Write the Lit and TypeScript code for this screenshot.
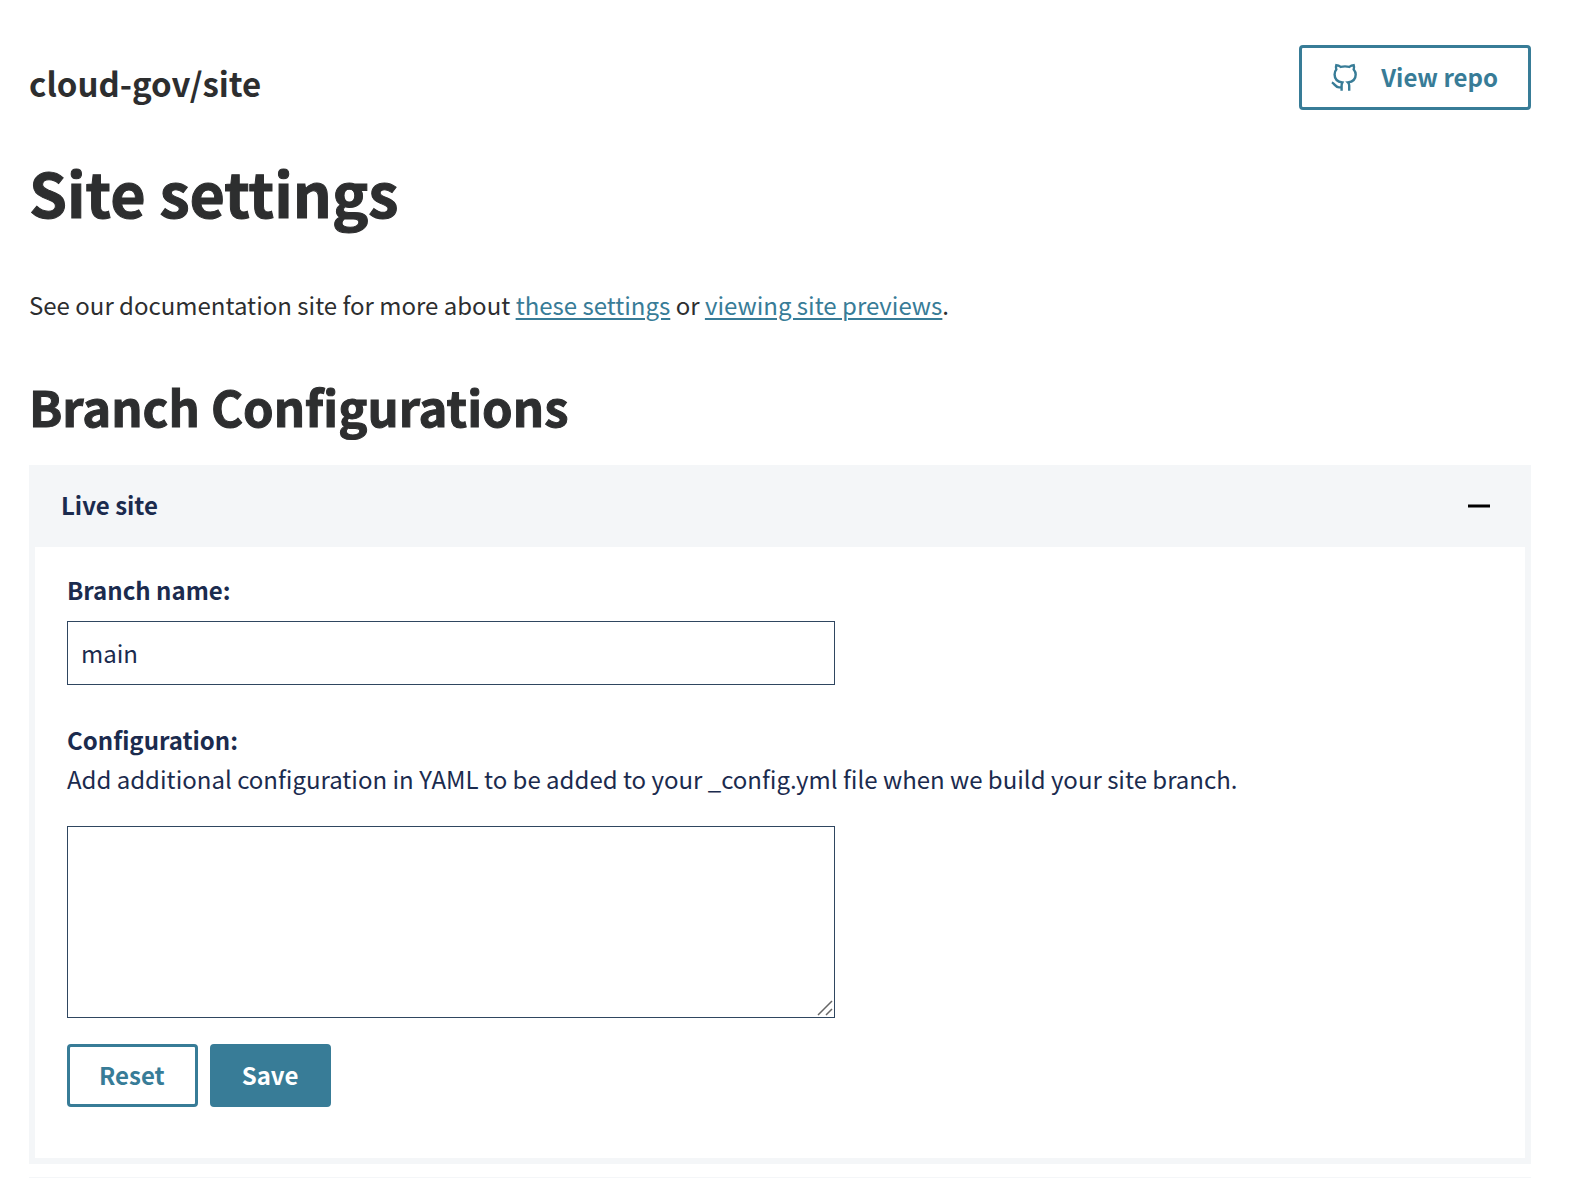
import { LitElement, html, css, nothing } from "lit";
import { customElement, state } from "lit/decorators.js";

@customElement("app-root")
export class AppRoot extends LitElement {
  @state() private open = true;

  static styles = css`
    :host {
      display: block;
      background: #fff;
      color: #2d2e2f;
      font-family: "Source Sans Pro", "Noto Sans CJK JP", "Noto Sans", sans-serif;
      font-size: 24px;
      line-height: 36px;
    }
    * {
      box-sizing: border-box;
    }
    .page {
      padding: 45px 43px 0 29px;
    }
    .top {
      display: flex;
      justify-content: space-between;
      align-items: flex-start;
    }
    h1,
    h2,
    h3,
    p {
      margin: 0;
    }
    .site {
      padding-top: 18px;
      font-size: 33px;
      line-height: 40px;
      font-weight: 700;
    }
    .title {
      margin-top: 46px;
      font-size: 61px;
      line-height: 72px;
      -webkit-text-stroke: 1px currentColor;
    }
    .intro {
      margin-top: 59px;
    }
    .intro a {
      color: #387c97;
      text-decoration-thickness: 2px;
      text-underline-offset: 3px;
    }
    .section {
      margin: 53px 0 29px;
      font-size: 49px;
      line-height: 60px;
      -webkit-text-stroke: 1px currentColor;
    }
    .btn {
      display: inline-flex;
      align-items: center;
      justify-content: center;
      padding: 11px 30px 12px 29px;
      border: 3px solid #387c97;
      border-radius: 4px;
      background: #fff;
      color: #387c97;
      font: inherit;
      font-weight: 700;
      text-decoration: none;
      cursor: pointer;
    }
    .repo {
      gap: 22px;
    }
    .repo svg {
      width: 28px;
      height: 28px;
    }
    .primary {
      background: #387c97;
      color: #fff;
    }
    .panel {
      margin-bottom: 13px;
      border: 6px solid #f4f6f8;
      border-top: 0;
      color: #1b2b4e;
    }
    .divider {
      height: 1px;
      background: #f4f6f8;
    }
    .heading {
      margin: 0 -6px;
      font-size: 24px;
      line-height: 36px;
    }
    .toggle {
      display: flex;
      align-items: center;
      justify-content: space-between;
      width: 100%;
      padding: 22px 40px 24px 32px;
      border: 0;
      background: #f4f6f8;
      color: inherit;
      font: inherit;
      font-weight: 700;
      text-align: left;
      cursor: pointer;
    }
    .toggle svg {
      width: 24px;
      height: 24px;
      display: block;
    }
    .body {
      padding: 25px 32px 51px;
    }
    .label {
      display: block;
      font-weight: 700;
    }
    .input,
    .area {
      display: block;
      width: 100%;
      margin: 0;
      border: 1px solid #2f4660;
      border-radius: 0;
      background: #fff;
      color: inherit;
      font: inherit;
    }
    .input {
      max-width: 768px;
      height: 64px;
      margin: 13px 0 37px;
      padding: 0 13px 2px;
    }
    .hint {
      margin: 3px 0 29px;
    }
    .area-wrap {
      position: relative;
      max-width: 768px;
    }
    .area {
      height: 192px;
      padding: 12px;
      resize: vertical;
    }
    .area::-webkit-resizer {
      background: transparent;
    }
    .grip {
      position: absolute;
      right: 2px;
      bottom: 2px;
      width: 16px;
      height: 16px;
      pointer-events: none;
    }
    .actions {
      display: flex;
      gap: 12px;
      margin-top: 26px;
    }
    .actions .btn {
      padding-top: 10px;
      padding-bottom: 11px;
    }
  `;

  private renderBody() {
    return html`
      <form class="body" id="live" @submit=${(e: Event) => e.preventDefault()}>
        <label class="label" for="branch">Branch name:</label>
        <input class="input" id="branch" type="text" value="main" />
        <label class="label" for="config">Configuration:</label>
        <p class="hint" id="hint">
          Add additional configuration in YAML to be added to your _config.yml file when we build your site branch.
        </p>
        <div class="area-wrap">
          <textarea class="area" id="config" aria-describedby="hint"></textarea>
          <svg class="grip" viewBox="0 0 16 16" fill="none" stroke="#666" stroke-width="1.5" aria-hidden="true">
            <path d="M1 15 15 1M9 15l6-6" />
          </svg>
        </div>
        <div class="actions">
          <button class="btn" type="reset">Reset</button>
          <button class="btn primary" type="submit">Save</button>
        </div>
      </form>
    `;
  }

  render() {
    return html`
      <main class="page">
        <header class="top">
          <p class="site">cloud-gov/site</p>
          <a class="btn repo" href="#repo">
            <svg viewBox="0 0 28 28" fill="none" stroke="currentColor" stroke-width="2.4" aria-hidden="true">
              <path
                d="M10.6 27.8V22.5C10.6 21 11 20.1 11.4 19.4C6.4 18.7 3.6 16.2 3.6 11.4C3.6 9.2 4.2 7.8 5.3 6.5C4.8 4.8 4.8 3.4 5.3 2.1C7 2.2 8.4 2.9 9.7 3.9C12.4 3.3 15.6 3.3 18.3 3.9C19.6 2.9 21 2.2 22.7 2.1C23.2 3.4 23.2 4.8 22.7 6.5C23.8 7.8 24.7 9.2 24.7 11.4C24.7 16.2 21.8 18.7 16.9 19.4C17.7 20.1 18.2 21 18.2 22.5V27.8"
              />
              <path d="M.8 19.6C3.6 20.2 4.4 24.4 8 24.4H10.6" />
            </svg>
            <span>View repo</span>
          </a>
        </header>
        <h1 class="title">Site settings</h1>
        <p class="intro">
          See our documentation site for more about <a href="#settings">these settings</a> or
          <a href="#previews">viewing site previews</a>.
        </p>
        <h2 class="section">Branch Configurations</h2>
        <section class="panel">
          <h3 class="heading">
            <button
              class="toggle"
              type="button"
              aria-expanded=${this.open ? "true" : "false"}
              aria-controls="live"
              @click=${() => (this.open = !this.open)}
            >
              <span>Live site</span>
              <svg viewBox="0 0 24 24" stroke="#000" stroke-width="3" aria-hidden="true">
                <path d=${this.open ? "M1 13H23" : "M1 13H23M12 2V24"} />
              </svg>
            </button>
          </h3>
          ${this.open ? this.renderBody() : nothing}
        </section>
        <div class="divider"></div>
      </main>
    `;
  }
}
